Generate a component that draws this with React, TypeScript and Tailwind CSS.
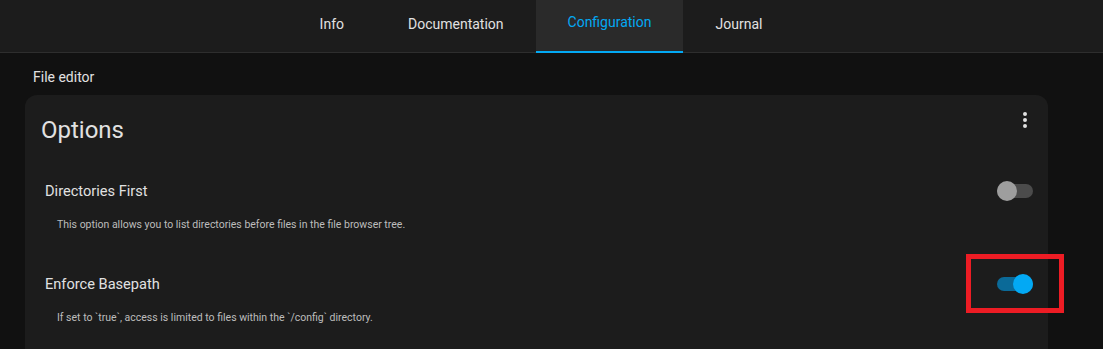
const tabs = ["Info", "Documentation", "Configuration", "Journal"];

const Toggle = ({ on }: { on: boolean }) => {
  return (
    <div className="relative w-[36px] h-[20px] shrink-0">
      <div
        className={
          "absolute left-0 right-0 top-[3px] h-[14px] rounded-full " +
          (on ? "bg-[#0b6a98]" : "bg-[#4b4b4b]")
        }
      />
      <div
        className={
          "absolute top-0 w-[20px] h-[20px] rounded-full " +
          (on ? "right-0 bg-[#03a9f4]" : "left-0 bg-[#9e9e9e]")
        }
      />
    </div>
  );
};

const Option = ({
  title,
  desc,
  on,
  first,
}: {
  title: string;
  desc: string;
  on: boolean;
  first?: boolean;
}) => {
  return (
    <div className={first ? "mt-[35px]" : "mt-[41px]"}>
      <div className="flex h-[20px] items-center justify-between">
        <span className="text-[14.6px] leading-[20px] text-[#e1e1e1]">{title}</span>
        <Toggle on={on} />
      </div>
      <p className="mt-[16px] pl-[12px] text-[10.5px] leading-[16px] text-[#bdbdbd]">
        {desc}
      </p>
    </div>
  );
};

export default function App() {
  return (
    <div className="relative min-h-screen bg-[#111111] font-['Roboto',sans-serif]">
      <div className="flex h-[53px] justify-center pr-[21px] bg-[#1c1c1c] shadow-[inset_0_-1px_0_#2e2e2e]">
        {tabs.map((t) => {
          const active = t === "Configuration";
          return (
            <div
              key={t}
              className={
                "h-full px-8 text-[14px] leading-[20px] " +
                (active
                  ? "pt-[12px] bg-[#2a2a2a] text-[#03a9f4] shadow-[inset_0_-2px_0_#03a9f4]"
                  : "pt-[14px] text-[#e1e1e1]")
              }
            >
              {t}
            </div>
          );
        })}
      </div>

      <div className="pl-[33px] pt-[14px] text-[14px] leading-[20px] text-[#e1e1e1]">
        File editor
      </div>

      <div className="ml-[25px] mr-[55px] mt-[8px] rounded-[12px] bg-[#1c1c1c] pb-[40px]">
        <div className="flex items-start justify-between pl-[16px] pr-[11px]">
          <h1 className="pt-[19px] text-[24px] leading-[32px] text-[#e1e1e1]">Options</h1>
          <svg viewBox="0 0 24 24" className="mt-[13px] h-[24px] w-[24px] fill-[#e1e1e1]">
            <path d="M12,16A2,2 0 0,1 14,18A2,2 0 0,1 12,20A2,2 0 0,1 10,18A2,2 0 0,1 12,16M12,10A2,2 0 0,1 14,12A2,2 0 0,1 12,14A2,2 0 0,1 10,12A2,2 0 0,1 12,10M12,4A2,2 0 0,1 14,6A2,2 0 0,1 12,8A2,2 0 0,1 10,6A2,2 0 0,1 12,4Z" />
          </svg>
        </div>
        <div className="pl-[20px] pr-[15px]">
          <Option
            first
            title="Directories First"
            desc="This option allows you to list directories before files in the file browser tree."
            on={false}
          />
          <Option
            title="Enforce Basepath"
            desc="If set to `true`, access is limited to files within the `/config` directory."
            on={true}
          />
        </div>
      </div>

      <div className="absolute left-[966px] top-[254px] h-[59px] w-[98px] border-[5px] border-[#ed1c24]" />
    </div>
  );
}
